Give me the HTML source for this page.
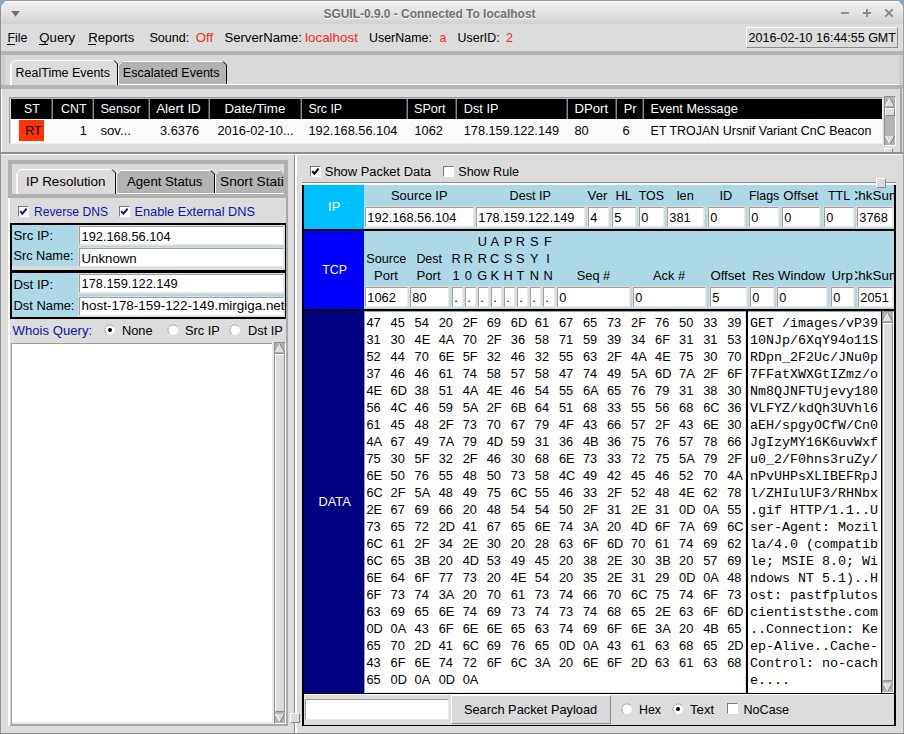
<!DOCTYPE html><html><head><meta charset="utf-8"><style>
html,body{margin:0;padding:0;}
body{width:904px;height:734px;position:relative;overflow:hidden;background:#d9d9d9;font-family:"Liberation Sans",sans-serif;}
.a{position:absolute;box-sizing:border-box;}
.t{position:absolute;line-height:0;white-space:pre;font-family:"Liberation Sans",sans-serif;}
.m{font-family:"Liberation Mono",monospace;}
</style></head><body>
<div class="a" style="left:0;top:0;width:904px;height:24px;background:#9a9a9a;clip-path:polygon(5px 0,899px 0,904px 5px,904px 100%,0 100%,0 5px)"></div>
<div class="a" style="left:1px;top:1px;width:902px;height:23px;background:linear-gradient(#eeeeee,#e4e4e4 50%,#d2d2d2);clip-path:polygon(4.5px 0,897.5px 0,902px 4.5px,902px 100%,0 100%,0 4.5px)"></div>
<div class="a" style="left:0px;top:0px;width:904px;height:6px;background:#86a8cc;z-index:-1"></div>
<div class="a" style="left:0px;top:0px;width:904px;height:6px;background:#86a8cc;clip-path:polygon(0 0,5px 0,0 5px);"></div>
<div class="a" style="left:0px;top:0px;width:904px;height:6px;background:#86a8cc;clip-path:polygon(899px 0,904px 0,904px 5px);"></div>
<div class="a" style="left:5px;top:1px;width:894px;height:1px;background:#fafafa"></div>
<svg class="a" style="left:10px;top:10px" width="11" height="8" viewBox="0 0 11 8"><path d="M1.3 1 L9.7 1 L5.5 6.8 Z" fill="#6e6e6e"/></svg>
<div class="t" style="left:323.50px;top:14px;font-size:11.94px;color:#727272;font-weight:bold;text-shadow:0 1px 0 #fafafa;">SGUIL-0.9.0 - Connected To localhost</div>
<svg class="a" style="left:838px;top:5px" width="60" height="16" viewBox="0 0 60 16"><path d="M3 8 H11" stroke="#858585" stroke-width="1.8"/><path d="M25 8 H33 M29 4 V12" stroke="#858585" stroke-width="1.8"/><path d="M47.3 4.3 L54.7 11.7 M54.7 4.3 L47.3 11.7" stroke="#858585" stroke-width="1.8"/></svg>
<div class="a" style="left:0px;top:24px;width:904px;height:27px;background:#dcdcdc;"></div>
<div class="a" style="left:0px;top:5px;width:1px;height:729px;background:#909090;"></div>
<div class="a" style="left:903px;top:5px;width:1px;height:729px;background:#a0a0a0;"></div>
<div class="a" style="left:0px;top:733px;width:904px;height:1px;background:#909090;"></div>
<div class="t" style="left:7.50px;top:38px;font-size:12.4px;color:#000;">File</div>
<div class="a" style="left:7px;top:44px;width:8px;height:1px;background:#000;"></div>
<div class="t" style="left:39.30px;top:38px;font-size:13.2px;color:#000;">Query</div>
<div class="a" style="left:39px;top:44px;width:9px;height:1px;background:#000;"></div>
<div class="t" style="left:88.20px;top:38px;font-size:13.2px;color:#000;">Reports</div>
<div class="a" style="left:88px;top:44px;width:8px;height:1px;background:#000;"></div>
<div class="t" style="left:149.40px;top:38px;font-size:12.62px;color:#000;">Sound:</div>
<div class="t" style="left:195.80px;top:38px;font-size:13.2px;color:#ff2a1a;">Off</div>
<div class="t" style="left:224.40px;top:38px;font-size:13.16px;color:#000;">ServerName:</div>
<div class="t" style="left:305.00px;top:38px;font-size:13.42px;color:#ff2a1a;">localhost</div>
<div class="t" style="left:369.00px;top:38px;font-size:12.45px;color:#000;">UserName:</div>
<div class="t" style="left:439.60px;top:38px;font-size:12.4px;color:#ff2a1a;">a</div>
<div class="t" style="left:457.60px;top:38px;font-size:12.4px;color:#000;">UserID:</div>
<div class="t" style="left:506.00px;top:38px;font-size:12.5px;color:#ff2a1a;">2</div>
<div class="a" style="left:746px;top:27px;width:152px;height:21px;background:#dcdcdc;border-style:solid;border-width:1px;border-color:#fff #8e8e8e #8e8e8e #fff"></div>
<div class="t" style="left:748.60px;top:38px;font-size:12.51px;color:#000;">2016-02-10 16:44:55 GMT</div>
<div class="a" style="left:1px;top:51px;width:902px;height:4px;background:#b4b4b4;"></div>
<div class="a" style="left:1px;top:55px;width:4px;height:30px;background:#cdcdcd;"></div>
<div class="a" style="left:1px;top:85px;width:902px;height:4px;background:#b4b4b4;"></div>
<div class="a" style="left:899px;top:55px;width:4px;height:30px;background:#cdcdcd;"></div>
<svg class="a" style="left:10px;top:60px" width="108" height="25" viewBox="0 0 108 25"><path d="M0 4 L4 0 L104 0 L108 4 L108 25 L0 25 Z" fill="#dcdcdc"/><path d="M0.5 25 L0.5 4.5 L4.5 0.5 L104 0.5" fill="none" stroke="#fff" stroke-width="1"/><path d="M1.5 25 L1.5 4.5" fill="none" stroke="#fff" stroke-width="1"/><path d="M104 0.5 L107.5 4 L107.5 25" fill="none" stroke="#000" stroke-width="1"/></svg>
<svg class="a" style="left:118px;top:61px" width="109" height="23" viewBox="0 0 109 23"><path d="M0 4 L4 0 L105 0 L109 4 L109 23 L0 23 Z" fill="#b3b3b3"/><path d="M0.5 23 L0.5 4.5 L4.5 0.5 L105 0.5" fill="none" stroke="#fff" stroke-width="1"/><path d="M105 0.5 L108.5 4 L108.5 23" fill="none" stroke="#000" stroke-width="1"/></svg>
<div class="a" style="left:118px;top:84px;width:781px;height:1px;background:#fff;"></div>
<div class="t" style="left:15.60px;top:73px;font-size:12.47px;color:#000;">RealTime Events</div>
<div class="t" style="left:122.80px;top:73px;font-size:12.54px;color:#000;">Escalated Events</div>
<div class="a" style="left:1px;top:89px;width:902px;height:63px;background:#dcdcdc;"></div>
<div class="a" style="left:1px;top:89px;width:1px;height:63px;background:#fff;"></div>
<div class="a" style="left:900px;top:89px;width:2px;height:63px;background:#a8a8a8;"></div>
<div class="a" style="left:9px;top:97px;width:874px;height:47px;border-style:solid;border-width:1px;border-color:#9a9a9a #f0f0f0 #f0f0f0 #9a9a9a"></div>
<div class="a" style="left:10px;top:98px;width:872px;height:1px;background:#b8b8b8;"></div>
<div class="a" style="left:11px;top:99px;width:871px;height:20px;background:#000;"></div>
<div class="a" style="left:11px;top:119px;width:871px;height:24px;background:#fbfbfb;"></div>
<div class="a" style="left:51px;top:99px;width:1px;height:20px;background:#404040;"></div>
<div class="a" style="left:52px;top:99px;width:1px;height:20px;background:#8a8a8a;"></div>
<div class="a" style="left:92px;top:99px;width:1px;height:20px;background:#404040;"></div>
<div class="a" style="left:93px;top:99px;width:1px;height:20px;background:#8a8a8a;"></div>
<div class="a" style="left:148px;top:99px;width:1px;height:20px;background:#404040;"></div>
<div class="a" style="left:149px;top:99px;width:1px;height:20px;background:#8a8a8a;"></div>
<div class="a" style="left:208px;top:99px;width:1px;height:20px;background:#404040;"></div>
<div class="a" style="left:209px;top:99px;width:1px;height:20px;background:#8a8a8a;"></div>
<div class="a" style="left:300px;top:99px;width:1px;height:20px;background:#404040;"></div>
<div class="a" style="left:301px;top:99px;width:1px;height:20px;background:#8a8a8a;"></div>
<div class="a" style="left:406px;top:99px;width:1px;height:20px;background:#404040;"></div>
<div class="a" style="left:407px;top:99px;width:1px;height:20px;background:#8a8a8a;"></div>
<div class="a" style="left:455px;top:99px;width:1px;height:20px;background:#404040;"></div>
<div class="a" style="left:456px;top:99px;width:1px;height:20px;background:#8a8a8a;"></div>
<div class="a" style="left:566px;top:99px;width:1px;height:20px;background:#404040;"></div>
<div class="a" style="left:567px;top:99px;width:1px;height:20px;background:#8a8a8a;"></div>
<div class="a" style="left:615px;top:99px;width:1px;height:20px;background:#404040;"></div>
<div class="a" style="left:616px;top:99px;width:1px;height:20px;background:#8a8a8a;"></div>
<div class="a" style="left:642px;top:99px;width:1px;height:20px;background:#404040;"></div>
<div class="a" style="left:643px;top:99px;width:1px;height:20px;background:#8a8a8a;"></div>
<div class="t" style="left:23.90px;top:109px;font-size:12.4px;color:#fff;">ST</div>
<div class="t" style="left:61.00px;top:109px;font-size:12.4px;color:#fff;">CNT</div>
<div class="t" style="left:100.40px;top:109px;font-size:12.71px;color:#fff;">Sensor</div>
<div class="t" style="left:156.20px;top:109px;font-size:13.39px;color:#fff;">Alert ID</div>
<div class="t" style="left:224.40px;top:109px;font-size:13.32px;color:#fff;">Date/Time</div>
<div class="t" style="left:308.40px;top:109px;font-size:12.4px;color:#fff;">Src IP</div>
<div class="t" style="left:414.00px;top:109px;font-size:12.64px;color:#fff;">SPort</div>
<div class="t" style="left:463.80px;top:109px;font-size:12.72px;color:#fff;">Dst IP</div>
<div class="t" style="left:574.40px;top:109px;font-size:13.2px;color:#fff;">DPort</div>
<div class="t" style="left:623.70px;top:109px;font-size:12.8px;color:#fff;">Pr</div>
<div class="t" style="left:650.50px;top:109px;font-size:12.67px;color:#fff;">Event Message</div>
<div class="a" style="left:19px;top:120px;width:25px;height:21px;background:#ff3300;"></div>
<div class="t" style="left:25.30px;top:131px;font-size:12.4px;color:#000;">RT</div>
<div class="t" style="left:79.80px;top:131px;font-size:12.8px;color:#000;">1</div>
<div class="t" style="left:100.40px;top:131px;font-size:13.19px;color:#000;">sov...</div>
<div class="t" style="left:160.00px;top:131px;font-size:12.8px;color:#000;">3.6376</div>
<div class="t" style="left:217.50px;top:131px;font-size:12.8px;color:#000;">2016-02-10...</div>
<div class="t" style="left:308.50px;top:131px;font-size:12.8px;color:#000;">192.168.56.104</div>
<div class="t" style="left:414.50px;top:131px;font-size:12.8px;color:#000;">1062</div>
<div class="t" style="left:463.80px;top:131px;font-size:12.7px;color:#000;">178.159.122.149</div>
<div class="t" style="left:574.50px;top:131px;font-size:12.8px;color:#000;">80</div>
<div class="t" style="left:622.50px;top:131px;font-size:12.8px;color:#000;">6</div>
<div class="t" style="left:650.60px;top:131px;font-size:12.46px;color:#000;">ET TROJAN Ursnif Variant CnC Beacon</div>
<div class="a" style="left:884px;top:96px;width:12px;height:50px;background:#b3b3b3;border-style:solid;border-width:1px;border-color:#8e8e8e #fff #fff #8e8e8e"></div>
<div class="a" style="left:885px;top:97px;width:10px;height:10px;background:#b3b3b3;"></div>
<svg class="a" style="left:885px;top:97px" width="10" height="10" viewBox="0 0 10 10"><path d="M5 1 L9.5 9 L0.5 9 Z" fill="#dcdcdc"/><path d="M0.5 9 L5 1" stroke="#fff" stroke-width="1" fill="none"/><path d="M5 1 L9.5 9" stroke="#7a7a7a" stroke-width="1" fill="none"/></svg>
<div class="a" style="left:885px;top:107px;width:10px;height:1px;background:#8e8e8e;"></div>
<div class="a" style="left:885px;top:108px;width:10px;height:8px;background:#dcdcdc;border-style:solid;border-width:1px;border-color:#fff #8e8e8e #8e8e8e #fff"></div>
<div class="a" style="left:885px;top:134px;width:10px;height:11px;background:#b3b3b3;"></div>
<svg class="a" style="left:885px;top:135px" width="10" height="10" viewBox="0 0 10 10"><path d="M0.5 1 L9.5 1 L5 9 Z" fill="#dcdcdc"/><path d="M0.5 1 L5 9" stroke="#fff" stroke-width="1" fill="none"/><path d="M9.5 1 L5 9" stroke="#7a7a7a" stroke-width="1" fill="none"/></svg>
<div class="a" style="left:884px;top:148px;width:9px;height:10px;background:#dcdcdc;border:1px solid;border-color:#fff #8a8a8a #8a8a8a #fff"></div>
<div class="a" style="left:1px;top:152px;width:902px;height:2px;background:#8e8e8e;"></div>
<div class="a" style="left:1px;top:154px;width:902px;height:1px;background:#fff;"></div>
<div class="a" style="left:1px;top:155px;width:293px;height:578px;background:#dcdcdc;"></div>
<div class="a" style="left:294px;top:155px;width:1px;height:578px;background:#8e8e8e;"></div>
<div class="a" style="left:295px;top:155px;width:2px;height:578px;background:#fff;"></div>
<div class="a" style="left:8px;top:198px;width:2px;height:528px;background:#fff;"></div>
<div class="a" style="left:286px;top:198px;width:2px;height:528px;background:#aaaaaa;"></div>
<div class="a" style="left:10px;top:724px;width:278px;height:2px;background:#a8a8a8;"></div>
<div class="a" style="left:8px;top:160px;width:280px;height:4px;background:#b0b0b0;"></div>
<div class="a" style="left:8px;top:164px;width:4px;height:31px;background:#b0b0b0;"></div>
<div class="a" style="left:284px;top:164px;width:4px;height:31px;background:#b0b0b0;"></div>
<div class="a" style="left:8px;top:194px;width:280px;height:4px;background:#b0b0b0;"></div>
<div class="a" style="left:12px;top:164px;width:272px;height:30px;background:#dcdcdc;"></div>
<svg class="a" style="left:16px;top:169px" width="100" height="25" viewBox="0 0 100 25"><path d="M0 4 L4 0 L96 0 L100 4 L100 25 L0 25 Z" fill="#dcdcdc"/><path d="M0.5 25 L0.5 4.5 L4.5 0.5 L96 0.5" fill="none" stroke="#fff" stroke-width="1"/><path d="M1.5 25 L1.5 4.5" fill="none" stroke="#fff" stroke-width="1"/><path d="M96 0.5 L99.5 4 L99.5 25" fill="none" stroke="#000" stroke-width="1"/></svg>
<svg class="a" style="left:116px;top:170px" width="99" height="23" viewBox="0 0 99 23"><path d="M0 4 L4 0 L95 0 L99 4 L99 23 L0 23 Z" fill="#b3b3b3"/><path d="M0.5 23 L0.5 4.5 L4.5 0.5 L95 0.5" fill="none" stroke="#fff" stroke-width="1"/><path d="M95 0.5 L98.5 4 L98.5 23" fill="none" stroke="#000" stroke-width="1"/></svg>
<svg class="a" style="left:215px;top:170px" width="69" height="23" viewBox="0 0 69 23"><path d="M0 4 L4 0 L65 0 L69 4 L69 23 L0 23 Z" fill="#b3b3b3"/><path d="M0.5 23 L0.5 4.5 L4.5 0.5 L65 0.5" fill="none" stroke="#fff" stroke-width="1"/></svg>
<div class="a" style="left:284px;top:164px;width:4px;height:31px;background:#b0b0b0;"></div>
<div class="a" style="left:116px;top:193px;width:168px;height:1px;background:#fff;"></div>
<div class="t" style="left:26.00px;top:182px;font-size:13.42px;color:#000;">IP Resolution</div>
<div class="t" style="left:127.00px;top:182px;font-size:13.18px;color:#000;">Agent Status</div>
<div class="a" style="left:215px;top:170px;width:69px;height:24px;overflow:hidden">
<div class="t" style="left:5.00px;top:12px;font-size:13.7px;color:#000;">Snort Statistics</div>
</div>
<div class="a" style="left:18px;top:206px;width:11px;height:11px;background:#fff;border-style:solid;border-width:1px;border-color:#7a7a7a #fff #fff #7a7a7a"></div>
<svg class="a" style="left:18px;top:206px" width="11" height="11" viewBox="0 0 11 11"><path d="M2.2 5.2 L4.3 7.6 L8.6 2.6" fill="none" stroke="#1212a0" stroke-width="2"/></svg>
<div class="t" style="left:34.00px;top:212px;font-size:12.11px;color:#1212a0;">Reverse DNS</div>
<div class="a" style="left:119px;top:206px;width:11px;height:11px;background:#fff;border-style:solid;border-width:1px;border-color:#7a7a7a #fff #fff #7a7a7a"></div>
<svg class="a" style="left:119px;top:206px" width="11" height="11" viewBox="0 0 11 11"><path d="M2.2 5.2 L4.3 7.6 L8.6 2.6" fill="none" stroke="#1212a0" stroke-width="2"/></svg>
<div class="t" style="left:134.50px;top:212px;font-size:12.75px;color:#1212a0;">Enable External DNS</div>
<div class="a" style="left:10px;top:223px;width:276px;height:96px;background:#000;"></div>
<div class="a" style="left:12px;top:225px;width:273px;height:41px;background:#add8e6;"></div>
<div class="a" style="left:12px;top:266px;width:273px;height:4px;background:#dcdcdc;"></div>
<div class="a" style="left:12px;top:273px;width:273px;height:44px;background:#add8e6;"></div>
<div class="t" style="left:13.50px;top:236px;font-size:13.2px;color:#000;">Src IP:</div>
<div class="t" style="left:13.50px;top:256px;font-size:12.71px;color:#000;">Src Name:</div>
<div class="t" style="left:13.50px;top:285px;font-size:13.2px;color:#000;">Dst IP:</div>
<div class="t" style="left:13.50px;top:306px;font-size:12.92px;color:#000;">Dst Name:</div>
<div class="a" style="left:78px;top:225px;width:207px;height:21px;background:#dcdcdc;"></div>
<div class="a" style="left:79px;top:226px;width:205px;height:19px;background:#fff;border-style:solid;border-width:1px;border-color:#a0a0a0 #e8e8e8 #e8e8e8 #a0a0a0"></div>
<div class="a" style="left:78px;top:247px;width:207px;height:21px;background:#dcdcdc;"></div>
<div class="a" style="left:79px;top:248px;width:205px;height:19px;background:#fff;border-style:solid;border-width:1px;border-color:#a0a0a0 #e8e8e8 #e8e8e8 #a0a0a0"></div>
<div class="a" style="left:78px;top:273px;width:207px;height:21px;background:#dcdcdc;"></div>
<div class="a" style="left:79px;top:274px;width:205px;height:19px;background:#fff;border-style:solid;border-width:1px;border-color:#a0a0a0 #e8e8e8 #e8e8e8 #a0a0a0"></div>
<div class="a" style="left:78px;top:296px;width:207px;height:21px;background:#dcdcdc;"></div>
<div class="a" style="left:79px;top:297px;width:205px;height:19px;background:#fff;border-style:solid;border-width:1px;border-color:#a0a0a0 #e8e8e8 #e8e8e8 #a0a0a0"></div>
<div class="t" style="left:81.60px;top:237px;font-size:12.8px;color:#000;">192.168.56.104</div>
<div class="t" style="left:81.60px;top:259px;font-size:13.2px;color:#000;">Unknown</div>
<div class="t" style="left:81.60px;top:284px;font-size:12.8px;color:#000;">178.159.122.149</div>
<div class="t" style="left:81.60px;top:306px;font-size:13.43px;color:#000;">host-178-159-122-149.mirgiga.net</div>
<div class="t" style="left:12.60px;top:331px;font-size:13.15px;color:#1212a0;">Whois Query:</div>
<svg class="a" style="left:104px;top:324px" width="12" height="12" viewBox="0 0 12 12"><circle cx="6" cy="6" r="5" fill="#fff"/><path d="M2.46 9.54 A5 5 0 0 1 9.54 2.46" fill="none" stroke="#6e6e6e" stroke-width="0.9" stroke-dasharray="1.4 0.9"/><circle cx="6" cy="6" r="2" fill="#000"/></svg>
<div class="t" style="left:122.00px;top:331px;font-size:12.8px;color:#000;">None</div>
<svg class="a" style="left:167px;top:324px" width="12" height="12" viewBox="0 0 12 12"><circle cx="6" cy="6" r="5" fill="#fff"/><path d="M2.46 9.54 A5 5 0 0 1 9.54 2.46" fill="none" stroke="#6e6e6e" stroke-width="0.9" stroke-dasharray="1.4 0.9"/></svg>
<div class="t" style="left:185.00px;top:331px;font-size:12.8px;color:#000;">Src IP</div>
<svg class="a" style="left:229px;top:324px" width="12" height="12" viewBox="0 0 12 12"><circle cx="6" cy="6" r="5" fill="#fff"/><path d="M2.46 9.54 A5 5 0 0 1 9.54 2.46" fill="none" stroke="#6e6e6e" stroke-width="0.9" stroke-dasharray="1.4 0.9"/></svg>
<div class="t" style="left:248.00px;top:331px;font-size:12.8px;color:#000;">Dst IP</div>
<div class="a" style="left:11px;top:343px;width:263px;height:381px;background:#e8e8e8;"></div>
<div class="a" style="left:11px;top:343px;width:261px;height:1px;background:#a0a0a0;"></div>
<div class="a" style="left:11px;top:343px;width:1px;height:381px;background:#a0a0a0;"></div>
<div class="a" style="left:12px;top:344px;width:260px;height:378px;background:#fff;"></div>
<div class="a" style="left:274px;top:342px;width:12px;height:382px;background:#b3b3b3;border-style:solid;border-width:1px;border-color:#8e8e8e #fff #fff #8e8e8e"></div>
<div class="a" style="left:275px;top:343px;width:10px;height:10px;background:#b3b3b3;"></div>
<svg class="a" style="left:275px;top:343px" width="10" height="10" viewBox="0 0 10 10"><path d="M5 1 L9.5 9 L0.5 9 Z" fill="#dcdcdc"/><path d="M0.5 9 L5 1" stroke="#fff" stroke-width="1" fill="none"/><path d="M5 1 L9.5 9" stroke="#7a7a7a" stroke-width="1" fill="none"/></svg>
<div class="a" style="left:275px;top:353px;width:10px;height:1px;background:#8e8e8e;"></div>
<div class="a" style="left:275px;top:354px;width:10px;height:358px;background:#dcdcdc;border-style:solid;border-width:1px;border-color:#fff #8e8e8e #8e8e8e #fff"></div>
<div class="a" style="left:275px;top:712px;width:10px;height:11px;background:#b3b3b3;"></div>
<svg class="a" style="left:275px;top:713px" width="10" height="10" viewBox="0 0 10 10"><path d="M0.5 1 L9.5 1 L5 9 Z" fill="#dcdcdc"/><path d="M0.5 1 L5 9" stroke="#fff" stroke-width="1" fill="none"/><path d="M9.5 1 L5 9" stroke="#7a7a7a" stroke-width="1" fill="none"/></svg>
<div class="a" style="left:298px;top:155px;width:604px;height:578px;background:#dcdcdc;"></div>
<div class="a" style="left:310px;top:166px;width:11px;height:11px;background:#fff;border-style:solid;border-width:1px;border-color:#7a7a7a #fff #fff #7a7a7a"></div>
<svg class="a" style="left:310px;top:166px" width="11" height="11" viewBox="0 0 11 11"><path d="M2.2 5.2 L4.3 7.6 L8.6 2.6" fill="none" stroke="#000" stroke-width="2"/></svg>
<div class="t" style="left:324.80px;top:172px;font-size:12.92px;color:#000;">Show Packet Data</div>
<div class="a" style="left:443px;top:166px;width:11px;height:11px;background:#fff;border-style:solid;border-width:1px;border-color:#7a7a7a #fff #fff #7a7a7a"></div>
<div class="t" style="left:458.30px;top:172px;font-size:12.54px;color:#000;">Show Rule</div>
<div class="a" style="left:302px;top:182px;width:594px;height:1px;background:#8e8e8e;"></div>
<div class="a" style="left:302px;top:183px;width:594px;height:2px;background:#fafafa;"></div>
<div class="a" style="left:302px;top:185px;width:594px;height:541px;background:#000;"></div>
<div class="a" style="left:304px;top:185px;width:60px;height:44px;background:#00bfff;"></div>
<div class="a" style="left:304px;top:231px;width:60px;height:78px;background:#0000ff;"></div>
<div class="a" style="left:304px;top:311px;width:60px;height:382px;background:#000080;"></div>
<div class="a" style="left:364px;top:185px;width:530px;height:44px;background:#add8e6;"></div>
<div class="a" style="left:364px;top:231px;width:530px;height:78px;background:#add8e6;"></div>
<div class="a" style="left:304px;top:693px;width:590px;height:1px;background:#000;"></div>
<div class="a" style="left:304px;top:694px;width:590px;height:31px;background:#dcdcdc;"></div>
<div class="a" style="left:304px;top:694px;width:590px;height:1px;background:#fafafa;"></div>
<div class="a" style="left:876px;top:178px;width:10px;height:10px;background:#dcdcdc;border:1px solid;border-color:#fff #8a8a8a #8a8a8a #fff"></div>
<div class="t" style="left:328.10px;top:207px;font-size:12.8px;color:#fff;">IP</div>
<div class="t" style="left:322.30px;top:270px;font-size:12.4px;color:#fff;">TCP</div>
<div class="t" style="left:318.50px;top:502px;font-size:12.8px;color:#fff;">DATA</div>
<div class="t" style="left:391.00px;top:196px;font-size:12.89px;color:#000;">Source IP</div>
<div class="t" style="left:509.60px;top:196px;font-size:12.62px;color:#000;">Dest IP</div>
<div class="t" style="left:587.60px;top:196px;font-size:13.2px;color:#000;">Ver</div>
<div class="t" style="left:615.50px;top:196px;font-size:12.8px;color:#000;">HL</div>
<div class="t" style="left:638.70px;top:196px;font-size:12.4px;color:#000;">TOS</div>
<div class="t" style="left:676.70px;top:196px;font-size:12.8px;color:#000;">len</div>
<div class="t" style="left:719.40px;top:196px;font-size:12.8px;color:#000;">ID</div>
<div class="t" style="left:749.00px;top:196px;font-size:12.4px;color:#000;">Flags</div>
<div class="t" style="left:783.30px;top:196px;font-size:13.2px;color:#000;">Offset</div>
<div class="t" style="left:828.00px;top:196px;font-size:12.4px;color:#000;">TTL</div>
<div class="a" style="left:855px;top:185px;width:39px;height:20px;overflow:hidden">
<div class="t" style="left:-6.30px;top:11px;font-size:13.4px;color:#000;">ChkSum</div>
</div>
<div class="a" style="left:364px;top:206px;width:111px;height:22px;background:#dcdcdc;"></div>
<div class="a" style="left:365px;top:207px;width:109px;height:20px;background:#fff;border-style:solid;border-width:1px;border-color:#a0a0a0 #e8e8e8 #e8e8e8 #a0a0a0"></div>
<div class="t" style="left:367.30px;top:218px;font-size:12.8px;color:#000;">192.168.56.104</div>
<div class="a" style="left:475px;top:206px;width:111px;height:22px;background:#dcdcdc;"></div>
<div class="a" style="left:476px;top:207px;width:109px;height:20px;background:#fff;border-style:solid;border-width:1px;border-color:#a0a0a0 #e8e8e8 #e8e8e8 #a0a0a0"></div>
<div class="t" style="left:478.30px;top:218px;font-size:12.8px;color:#000;">178.159.122.149</div>
<div class="a" style="left:587px;top:206px;width:23px;height:22px;background:#dcdcdc;"></div>
<div class="a" style="left:588px;top:207px;width:21px;height:20px;background:#fff;border-style:solid;border-width:1px;border-color:#a0a0a0 #e8e8e8 #e8e8e8 #a0a0a0"></div>
<div class="t" style="left:590.30px;top:218px;font-size:12.8px;color:#000;">4</div>
<div class="a" style="left:611px;top:206px;width:26px;height:22px;background:#dcdcdc;"></div>
<div class="a" style="left:612px;top:207px;width:24px;height:20px;background:#fff;border-style:solid;border-width:1px;border-color:#a0a0a0 #e8e8e8 #e8e8e8 #a0a0a0"></div>
<div class="t" style="left:614.30px;top:218px;font-size:12.8px;color:#000;">5</div>
<div class="a" style="left:638px;top:206px;width:27px;height:22px;background:#dcdcdc;"></div>
<div class="a" style="left:639px;top:207px;width:25px;height:20px;background:#fff;border-style:solid;border-width:1px;border-color:#a0a0a0 #e8e8e8 #e8e8e8 #a0a0a0"></div>
<div class="t" style="left:641.30px;top:218px;font-size:12.8px;color:#000;">0</div>
<div class="a" style="left:666px;top:206px;width:39px;height:22px;background:#dcdcdc;"></div>
<div class="a" style="left:667px;top:207px;width:37px;height:20px;background:#fff;border-style:solid;border-width:1px;border-color:#a0a0a0 #e8e8e8 #e8e8e8 #a0a0a0"></div>
<div class="t" style="left:669.30px;top:218px;font-size:12.8px;color:#000;">381</div>
<div class="a" style="left:707px;top:206px;width:39px;height:22px;background:#dcdcdc;"></div>
<div class="a" style="left:708px;top:207px;width:37px;height:20px;background:#fff;border-style:solid;border-width:1px;border-color:#a0a0a0 #e8e8e8 #e8e8e8 #a0a0a0"></div>
<div class="t" style="left:710.30px;top:218px;font-size:12.8px;color:#000;">0</div>
<div class="a" style="left:748px;top:206px;width:32px;height:22px;background:#dcdcdc;"></div>
<div class="a" style="left:749px;top:207px;width:30px;height:20px;background:#fff;border-style:solid;border-width:1px;border-color:#a0a0a0 #e8e8e8 #e8e8e8 #a0a0a0"></div>
<div class="t" style="left:751.30px;top:218px;font-size:12.8px;color:#000;">0</div>
<div class="a" style="left:781px;top:206px;width:40px;height:22px;background:#dcdcdc;"></div>
<div class="a" style="left:782px;top:207px;width:38px;height:20px;background:#fff;border-style:solid;border-width:1px;border-color:#a0a0a0 #e8e8e8 #e8e8e8 #a0a0a0"></div>
<div class="t" style="left:784.30px;top:218px;font-size:12.8px;color:#000;">0</div>
<div class="a" style="left:823px;top:206px;width:32px;height:22px;background:#dcdcdc;"></div>
<div class="a" style="left:824px;top:207px;width:30px;height:20px;background:#fff;border-style:solid;border-width:1px;border-color:#a0a0a0 #e8e8e8 #e8e8e8 #a0a0a0"></div>
<div class="t" style="left:826.30px;top:218px;font-size:12.8px;color:#000;">0</div>
<div class="a" style="left:856px;top:206px;width:38px;height:22px;background:#dcdcdc;"></div>
<div class="a" style="left:857px;top:207px;width:36px;height:20px;background:#fff;border-style:solid;border-width:1px;border-color:#a0a0a0 #e8e8e8 #e8e8e8 #a0a0a0"></div>
<div class="t" style="left:859.30px;top:218px;font-size:12.8px;color:#000;">3768</div>
<div class="t" style="left:366.20px;top:259px;font-size:12.71px;color:#000;">Source</div>
<div class="t" style="left:374.00px;top:276px;font-size:13.04px;color:#000;">Port</div>
<div class="t" style="left:416.40px;top:259px;font-size:12.43px;color:#000;">Dest</div>
<div class="t" style="left:416.40px;top:276px;font-size:13.2px;color:#000;">Port</div>
<div class="t" style="left:451.39px;top:259px;font-size:12.8px;color:#000;">R</div>
<div class="t" style="left:452.42px;top:276px;font-size:12.8px;color:#000;">1</div>
<div class="t" style="left:463.79px;top:259px;font-size:12.8px;color:#000;">R</div>
<div class="t" style="left:464.82px;top:276px;font-size:12.8px;color:#000;">0</div>
<div class="t" style="left:477.69px;top:242px;font-size:12.8px;color:#000;">U</div>
<div class="t" style="left:477.69px;top:259px;font-size:12.8px;color:#000;">R</div>
<div class="t" style="left:477.31px;top:276px;font-size:12.8px;color:#000;">G</div>
<div class="t" style="left:490.41px;top:242px;font-size:12.8px;color:#000;">A</div>
<div class="t" style="left:490.09px;top:259px;font-size:12.8px;color:#000;">C</div>
<div class="t" style="left:490.41px;top:276px;font-size:12.8px;color:#000;">K</div>
<div class="t" style="left:503.71px;top:242px;font-size:12.8px;color:#000;">P</div>
<div class="t" style="left:503.71px;top:259px;font-size:12.8px;color:#000;">S</div>
<div class="t" style="left:503.39px;top:276px;font-size:12.8px;color:#000;">H</div>
<div class="t" style="left:515.79px;top:242px;font-size:12.8px;color:#000;">R</div>
<div class="t" style="left:516.11px;top:259px;font-size:12.8px;color:#000;">S</div>
<div class="t" style="left:516.50px;top:276px;font-size:12.8px;color:#000;">T</div>
<div class="t" style="left:530.11px;top:242px;font-size:12.8px;color:#000;">S</div>
<div class="t" style="left:530.11px;top:259px;font-size:12.8px;color:#000;">Y</div>
<div class="t" style="left:529.79px;top:276px;font-size:12.8px;color:#000;">N</div>
<div class="t" style="left:544.10px;top:242px;font-size:12.8px;color:#000;">F</div>
<div class="t" style="left:546.21px;top:259px;font-size:12.8px;color:#000;">I</div>
<div class="t" style="left:543.39px;top:276px;font-size:12.8px;color:#000;">N</div>
<div class="t" style="left:576.80px;top:276px;font-size:12.75px;color:#000;">Seq #</div>
<div class="t" style="left:653.10px;top:276px;font-size:12.76px;color:#000;">Ack #</div>
<div class="t" style="left:710.40px;top:276px;font-size:13.2px;color:#000;">Offset</div>
<div class="t" style="left:752.20px;top:276px;font-size:12.4px;color:#000;">Res</div>
<div class="t" style="left:778.00px;top:276px;font-size:13.2px;color:#000;">Window</div>
<div class="t" style="left:831.50px;top:276px;font-size:13.2px;color:#000;">Urp</div>
<div class="a" style="left:855px;top:265px;width:39px;height:20px;overflow:hidden">
<div class="t" style="left:-6.30px;top:11px;font-size:13.4px;color:#000;">ChkSum</div>
</div>
<div class="a" style="left:364px;top:286px;width:45px;height:22px;background:#dcdcdc;"></div>
<div class="a" style="left:365px;top:287px;width:43px;height:20px;background:#fff;border-style:solid;border-width:1px;border-color:#a0a0a0 #e8e8e8 #e8e8e8 #a0a0a0"></div>
<div class="t" style="left:367.30px;top:298px;font-size:12.8px;color:#000;">1062</div>
<div class="a" style="left:409px;top:286px;width:41px;height:22px;background:#dcdcdc;"></div>
<div class="a" style="left:410px;top:287px;width:39px;height:20px;background:#fff;border-style:solid;border-width:1px;border-color:#a0a0a0 #e8e8e8 #e8e8e8 #a0a0a0"></div>
<div class="t" style="left:412.30px;top:298px;font-size:12.8px;color:#000;">80</div>
<div class="a" style="left:451px;top:286px;width:13px;height:22px;background:#dcdcdc;"></div>
<div class="a" style="left:452px;top:287px;width:11px;height:20px;background:#fff;border-style:solid;border-width:1px;border-color:#a0a0a0 #e8e8e8 #e8e8e8 #a0a0a0"></div>
<div class="t" style="left:454.30px;top:298px;font-size:12.8px;color:#000;">.</div>
<div class="a" style="left:464px;top:286px;width:13px;height:22px;background:#dcdcdc;"></div>
<div class="a" style="left:465px;top:287px;width:11px;height:20px;background:#fff;border-style:solid;border-width:1px;border-color:#a0a0a0 #e8e8e8 #e8e8e8 #a0a0a0"></div>
<div class="t" style="left:467.30px;top:298px;font-size:12.8px;color:#000;">.</div>
<div class="a" style="left:477px;top:286px;width:13px;height:22px;background:#dcdcdc;"></div>
<div class="a" style="left:478px;top:287px;width:11px;height:20px;background:#fff;border-style:solid;border-width:1px;border-color:#a0a0a0 #e8e8e8 #e8e8e8 #a0a0a0"></div>
<div class="t" style="left:480.30px;top:298px;font-size:12.8px;color:#000;">.</div>
<div class="a" style="left:490px;top:286px;width:13px;height:22px;background:#dcdcdc;"></div>
<div class="a" style="left:491px;top:287px;width:11px;height:20px;background:#fff;border-style:solid;border-width:1px;border-color:#a0a0a0 #e8e8e8 #e8e8e8 #a0a0a0"></div>
<div class="t" style="left:493.30px;top:298px;font-size:12.8px;color:#000;">.</div>
<div class="a" style="left:503px;top:286px;width:13px;height:22px;background:#dcdcdc;"></div>
<div class="a" style="left:504px;top:287px;width:11px;height:20px;background:#fff;border-style:solid;border-width:1px;border-color:#a0a0a0 #e8e8e8 #e8e8e8 #a0a0a0"></div>
<div class="t" style="left:506.30px;top:298px;font-size:12.8px;color:#000;">.</div>
<div class="a" style="left:516px;top:286px;width:13px;height:22px;background:#dcdcdc;"></div>
<div class="a" style="left:517px;top:287px;width:11px;height:20px;background:#fff;border-style:solid;border-width:1px;border-color:#a0a0a0 #e8e8e8 #e8e8e8 #a0a0a0"></div>
<div class="t" style="left:519.30px;top:298px;font-size:12.8px;color:#000;">.</div>
<div class="a" style="left:529px;top:286px;width:13px;height:22px;background:#dcdcdc;"></div>
<div class="a" style="left:530px;top:287px;width:11px;height:20px;background:#fff;border-style:solid;border-width:1px;border-color:#a0a0a0 #e8e8e8 #e8e8e8 #a0a0a0"></div>
<div class="t" style="left:532.30px;top:298px;font-size:12.8px;color:#000;">.</div>
<div class="a" style="left:542px;top:286px;width:14px;height:22px;background:#dcdcdc;"></div>
<div class="a" style="left:543px;top:287px;width:12px;height:20px;background:#fff;border-style:solid;border-width:1px;border-color:#a0a0a0 #e8e8e8 #e8e8e8 #a0a0a0"></div>
<div class="t" style="left:545.30px;top:298px;font-size:12.8px;color:#000;">.</div>
<div class="a" style="left:556px;top:286px;width:75px;height:22px;background:#dcdcdc;"></div>
<div class="a" style="left:557px;top:287px;width:73px;height:20px;background:#fff;border-style:solid;border-width:1px;border-color:#a0a0a0 #e8e8e8 #e8e8e8 #a0a0a0"></div>
<div class="t" style="left:559.30px;top:298px;font-size:12.8px;color:#000;">0</div>
<div class="a" style="left:632px;top:286px;width:75px;height:22px;background:#dcdcdc;"></div>
<div class="a" style="left:633px;top:287px;width:73px;height:20px;background:#fff;border-style:solid;border-width:1px;border-color:#a0a0a0 #e8e8e8 #e8e8e8 #a0a0a0"></div>
<div class="t" style="left:635.30px;top:298px;font-size:12.8px;color:#000;">0</div>
<div class="a" style="left:709px;top:286px;width:39px;height:22px;background:#dcdcdc;"></div>
<div class="a" style="left:710px;top:287px;width:37px;height:20px;background:#fff;border-style:solid;border-width:1px;border-color:#a0a0a0 #e8e8e8 #e8e8e8 #a0a0a0"></div>
<div class="t" style="left:712.30px;top:298px;font-size:12.8px;color:#000;">5</div>
<div class="a" style="left:749px;top:286px;width:26px;height:22px;background:#dcdcdc;"></div>
<div class="a" style="left:750px;top:287px;width:24px;height:20px;background:#fff;border-style:solid;border-width:1px;border-color:#a0a0a0 #e8e8e8 #e8e8e8 #a0a0a0"></div>
<div class="t" style="left:752.30px;top:298px;font-size:12.8px;color:#000;">0</div>
<div class="a" style="left:776px;top:286px;width:52px;height:22px;background:#dcdcdc;"></div>
<div class="a" style="left:777px;top:287px;width:50px;height:20px;background:#fff;border-style:solid;border-width:1px;border-color:#a0a0a0 #e8e8e8 #e8e8e8 #a0a0a0"></div>
<div class="t" style="left:779.30px;top:298px;font-size:12.8px;color:#000;">0</div>
<div class="a" style="left:830px;top:286px;width:25px;height:22px;background:#dcdcdc;"></div>
<div class="a" style="left:831px;top:287px;width:23px;height:20px;background:#fff;border-style:solid;border-width:1px;border-color:#a0a0a0 #e8e8e8 #e8e8e8 #a0a0a0"></div>
<div class="t" style="left:833.30px;top:298px;font-size:12.8px;color:#000;">0</div>
<div class="a" style="left:857px;top:286px;width:37px;height:22px;background:#dcdcdc;"></div>
<div class="a" style="left:858px;top:287px;width:35px;height:20px;background:#fff;border-style:solid;border-width:1px;border-color:#a0a0a0 #e8e8e8 #e8e8e8 #a0a0a0"></div>
<div class="t" style="left:860.30px;top:298px;font-size:12.8px;color:#000;">2051</div>
<div class="a" style="left:364px;top:311px;width:382px;height:382px;background:#fff;border-style:solid;border-width:1px;border-color:#a0a0a0 #e4e4e4 #e4e4e4 #a0a0a0"></div>
<div class="a" style="left:747px;top:311px;width:1px;height:382px;background:#000;"></div>
<div class="a" style="left:748px;top:311px;width:134px;height:382px;background:#fff;"></div>
<div class="a" style="left:748px;top:311px;width:133px;height:1px;background:#a0a0a0;"></div>
<div class="a" style="left:881px;top:311px;width:1px;height:382px;background:#000;"></div>
<div class="a" style="left:882px;top:311px;width:12px;height:382px;background:#b3b3b3;border-style:solid;border-width:1px;border-color:#8e8e8e #fff #fff #8e8e8e"></div>
<div class="a" style="left:883px;top:312px;width:10px;height:10px;background:#b3b3b3;"></div>
<svg class="a" style="left:883px;top:312px" width="10" height="10" viewBox="0 0 10 10"><path d="M5 1 L9.5 9 L0.5 9 Z" fill="#dcdcdc"/><path d="M0.5 9 L5 1" stroke="#fff" stroke-width="1" fill="none"/><path d="M5 1 L9.5 9" stroke="#7a7a7a" stroke-width="1" fill="none"/></svg>
<div class="a" style="left:883px;top:322px;width:10px;height:1px;background:#8e8e8e;"></div>
<div class="a" style="left:883px;top:323px;width:10px;height:358px;background:#dcdcdc;border-style:solid;border-width:1px;border-color:#fff #8e8e8e #8e8e8e #fff"></div>
<div class="a" style="left:883px;top:681px;width:10px;height:11px;background:#b3b3b3;"></div>
<svg class="a" style="left:883px;top:682px" width="10" height="10" viewBox="0 0 10 10"><path d="M0.5 1 L9.5 1 L5 9 Z" fill="#dcdcdc"/><path d="M0.5 1 L5 9" stroke="#fff" stroke-width="1" fill="none"/><path d="M9.5 1 L5 9" stroke="#7a7a7a" stroke-width="1" fill="none"/></svg>
<div class="t" style="left:366.5px;top:323px;font-size:12.8px;color:#000"><span style="display:inline-block;width:24.05px">47</span><span style="display:inline-block;width:24.05px">45</span><span style="display:inline-block;width:24.05px">54</span><span style="display:inline-block;width:24.05px">20</span><span style="display:inline-block;width:24.05px">2F</span><span style="display:inline-block;width:24.05px">69</span><span style="display:inline-block;width:24.05px">6D</span><span style="display:inline-block;width:24.05px">61</span><span style="display:inline-block;width:24.05px">67</span><span style="display:inline-block;width:24.05px">65</span><span style="display:inline-block;width:24.05px">73</span><span style="display:inline-block;width:24.05px">2F</span><span style="display:inline-block;width:24.05px">76</span><span style="display:inline-block;width:24.05px">50</span><span style="display:inline-block;width:24.05px">33</span><span style="display:inline-block;width:24.05px">39</span></div>
<div class="t" style="left:750px;top:324px;font-size:13.33px;color:#000;font-family:'Liberation Mono',monospace">GET /images/vP39</div>
<div class="t" style="left:366.5px;top:340px;font-size:12.8px;color:#000"><span style="display:inline-block;width:24.05px">31</span><span style="display:inline-block;width:24.05px">30</span><span style="display:inline-block;width:24.05px">4E</span><span style="display:inline-block;width:24.05px">4A</span><span style="display:inline-block;width:24.05px">70</span><span style="display:inline-block;width:24.05px">2F</span><span style="display:inline-block;width:24.05px">36</span><span style="display:inline-block;width:24.05px">58</span><span style="display:inline-block;width:24.05px">71</span><span style="display:inline-block;width:24.05px">59</span><span style="display:inline-block;width:24.05px">39</span><span style="display:inline-block;width:24.05px">34</span><span style="display:inline-block;width:24.05px">6F</span><span style="display:inline-block;width:24.05px">31</span><span style="display:inline-block;width:24.05px">31</span><span style="display:inline-block;width:24.05px">53</span></div>
<div class="t" style="left:750px;top:341px;font-size:13.33px;color:#000;font-family:'Liberation Mono',monospace">10NJp/6XqY94o11S</div>
<div class="t" style="left:366.5px;top:357px;font-size:12.8px;color:#000"><span style="display:inline-block;width:24.05px">52</span><span style="display:inline-block;width:24.05px">44</span><span style="display:inline-block;width:24.05px">70</span><span style="display:inline-block;width:24.05px">6E</span><span style="display:inline-block;width:24.05px">5F</span><span style="display:inline-block;width:24.05px">32</span><span style="display:inline-block;width:24.05px">46</span><span style="display:inline-block;width:24.05px">32</span><span style="display:inline-block;width:24.05px">55</span><span style="display:inline-block;width:24.05px">63</span><span style="display:inline-block;width:24.05px">2F</span><span style="display:inline-block;width:24.05px">4A</span><span style="display:inline-block;width:24.05px">4E</span><span style="display:inline-block;width:24.05px">75</span><span style="display:inline-block;width:24.05px">30</span><span style="display:inline-block;width:24.05px">70</span></div>
<div class="t" style="left:750px;top:358px;font-size:13.33px;color:#000;font-family:'Liberation Mono',monospace">RDpn_2F2Uc/JNu0p</div>
<div class="t" style="left:366.5px;top:374px;font-size:12.8px;color:#000"><span style="display:inline-block;width:24.05px">37</span><span style="display:inline-block;width:24.05px">46</span><span style="display:inline-block;width:24.05px">46</span><span style="display:inline-block;width:24.05px">61</span><span style="display:inline-block;width:24.05px">74</span><span style="display:inline-block;width:24.05px">58</span><span style="display:inline-block;width:24.05px">57</span><span style="display:inline-block;width:24.05px">58</span><span style="display:inline-block;width:24.05px">47</span><span style="display:inline-block;width:24.05px">74</span><span style="display:inline-block;width:24.05px">49</span><span style="display:inline-block;width:24.05px">5A</span><span style="display:inline-block;width:24.05px">6D</span><span style="display:inline-block;width:24.05px">7A</span><span style="display:inline-block;width:24.05px">2F</span><span style="display:inline-block;width:24.05px">6F</span></div>
<div class="t" style="left:750px;top:375px;font-size:13.33px;color:#000;font-family:'Liberation Mono',monospace">7FFatXWXGtIZmz/o</div>
<div class="t" style="left:366.5px;top:391px;font-size:12.8px;color:#000"><span style="display:inline-block;width:24.05px">4E</span><span style="display:inline-block;width:24.05px">6D</span><span style="display:inline-block;width:24.05px">38</span><span style="display:inline-block;width:24.05px">51</span><span style="display:inline-block;width:24.05px">4A</span><span style="display:inline-block;width:24.05px">4E</span><span style="display:inline-block;width:24.05px">46</span><span style="display:inline-block;width:24.05px">54</span><span style="display:inline-block;width:24.05px">55</span><span style="display:inline-block;width:24.05px">6A</span><span style="display:inline-block;width:24.05px">65</span><span style="display:inline-block;width:24.05px">76</span><span style="display:inline-block;width:24.05px">79</span><span style="display:inline-block;width:24.05px">31</span><span style="display:inline-block;width:24.05px">38</span><span style="display:inline-block;width:24.05px">30</span></div>
<div class="t" style="left:750px;top:392px;font-size:13.33px;color:#000;font-family:'Liberation Mono',monospace">Nm8QJNFTUjevy180</div>
<div class="t" style="left:366.5px;top:408px;font-size:12.8px;color:#000"><span style="display:inline-block;width:24.05px">56</span><span style="display:inline-block;width:24.05px">4C</span><span style="display:inline-block;width:24.05px">46</span><span style="display:inline-block;width:24.05px">59</span><span style="display:inline-block;width:24.05px">5A</span><span style="display:inline-block;width:24.05px">2F</span><span style="display:inline-block;width:24.05px">6B</span><span style="display:inline-block;width:24.05px">64</span><span style="display:inline-block;width:24.05px">51</span><span style="display:inline-block;width:24.05px">68</span><span style="display:inline-block;width:24.05px">33</span><span style="display:inline-block;width:24.05px">55</span><span style="display:inline-block;width:24.05px">56</span><span style="display:inline-block;width:24.05px">68</span><span style="display:inline-block;width:24.05px">6C</span><span style="display:inline-block;width:24.05px">36</span></div>
<div class="t" style="left:750px;top:409px;font-size:13.33px;color:#000;font-family:'Liberation Mono',monospace">VLFYZ/kdQh3UVhl6</div>
<div class="t" style="left:366.5px;top:425px;font-size:12.8px;color:#000"><span style="display:inline-block;width:24.05px">61</span><span style="display:inline-block;width:24.05px">45</span><span style="display:inline-block;width:24.05px">48</span><span style="display:inline-block;width:24.05px">2F</span><span style="display:inline-block;width:24.05px">73</span><span style="display:inline-block;width:24.05px">70</span><span style="display:inline-block;width:24.05px">67</span><span style="display:inline-block;width:24.05px">79</span><span style="display:inline-block;width:24.05px">4F</span><span style="display:inline-block;width:24.05px">43</span><span style="display:inline-block;width:24.05px">66</span><span style="display:inline-block;width:24.05px">57</span><span style="display:inline-block;width:24.05px">2F</span><span style="display:inline-block;width:24.05px">43</span><span style="display:inline-block;width:24.05px">6E</span><span style="display:inline-block;width:24.05px">30</span></div>
<div class="t" style="left:750px;top:426px;font-size:13.33px;color:#000;font-family:'Liberation Mono',monospace">aEH/spgyOCfW/Cn0</div>
<div class="t" style="left:366.5px;top:442px;font-size:12.8px;color:#000"><span style="display:inline-block;width:24.05px">4A</span><span style="display:inline-block;width:24.05px">67</span><span style="display:inline-block;width:24.05px">49</span><span style="display:inline-block;width:24.05px">7A</span><span style="display:inline-block;width:24.05px">79</span><span style="display:inline-block;width:24.05px">4D</span><span style="display:inline-block;width:24.05px">59</span><span style="display:inline-block;width:24.05px">31</span><span style="display:inline-block;width:24.05px">36</span><span style="display:inline-block;width:24.05px">4B</span><span style="display:inline-block;width:24.05px">36</span><span style="display:inline-block;width:24.05px">75</span><span style="display:inline-block;width:24.05px">76</span><span style="display:inline-block;width:24.05px">57</span><span style="display:inline-block;width:24.05px">78</span><span style="display:inline-block;width:24.05px">66</span></div>
<div class="t" style="left:750px;top:443px;font-size:13.33px;color:#000;font-family:'Liberation Mono',monospace">JgIzyMY16K6uvWxf</div>
<div class="t" style="left:366.5px;top:459px;font-size:12.8px;color:#000"><span style="display:inline-block;width:24.05px">75</span><span style="display:inline-block;width:24.05px">30</span><span style="display:inline-block;width:24.05px">5F</span><span style="display:inline-block;width:24.05px">32</span><span style="display:inline-block;width:24.05px">2F</span><span style="display:inline-block;width:24.05px">46</span><span style="display:inline-block;width:24.05px">30</span><span style="display:inline-block;width:24.05px">68</span><span style="display:inline-block;width:24.05px">6E</span><span style="display:inline-block;width:24.05px">73</span><span style="display:inline-block;width:24.05px">33</span><span style="display:inline-block;width:24.05px">72</span><span style="display:inline-block;width:24.05px">75</span><span style="display:inline-block;width:24.05px">5A</span><span style="display:inline-block;width:24.05px">79</span><span style="display:inline-block;width:24.05px">2F</span></div>
<div class="t" style="left:750px;top:460px;font-size:13.33px;color:#000;font-family:'Liberation Mono',monospace">u0_2/F0hns3ruZy/</div>
<div class="t" style="left:366.5px;top:476px;font-size:12.8px;color:#000"><span style="display:inline-block;width:24.05px">6E</span><span style="display:inline-block;width:24.05px">50</span><span style="display:inline-block;width:24.05px">76</span><span style="display:inline-block;width:24.05px">55</span><span style="display:inline-block;width:24.05px">48</span><span style="display:inline-block;width:24.05px">50</span><span style="display:inline-block;width:24.05px">73</span><span style="display:inline-block;width:24.05px">58</span><span style="display:inline-block;width:24.05px">4C</span><span style="display:inline-block;width:24.05px">49</span><span style="display:inline-block;width:24.05px">42</span><span style="display:inline-block;width:24.05px">45</span><span style="display:inline-block;width:24.05px">46</span><span style="display:inline-block;width:24.05px">52</span><span style="display:inline-block;width:24.05px">70</span><span style="display:inline-block;width:24.05px">4A</span></div>
<div class="t" style="left:750px;top:477px;font-size:13.33px;color:#000;font-family:'Liberation Mono',monospace">nPvUHPsXLIBEFRpJ</div>
<div class="t" style="left:366.5px;top:493px;font-size:12.8px;color:#000"><span style="display:inline-block;width:24.05px">6C</span><span style="display:inline-block;width:24.05px">2F</span><span style="display:inline-block;width:24.05px">5A</span><span style="display:inline-block;width:24.05px">48</span><span style="display:inline-block;width:24.05px">49</span><span style="display:inline-block;width:24.05px">75</span><span style="display:inline-block;width:24.05px">6C</span><span style="display:inline-block;width:24.05px">55</span><span style="display:inline-block;width:24.05px">46</span><span style="display:inline-block;width:24.05px">33</span><span style="display:inline-block;width:24.05px">2F</span><span style="display:inline-block;width:24.05px">52</span><span style="display:inline-block;width:24.05px">48</span><span style="display:inline-block;width:24.05px">4E</span><span style="display:inline-block;width:24.05px">62</span><span style="display:inline-block;width:24.05px">78</span></div>
<div class="t" style="left:750px;top:494px;font-size:13.33px;color:#000;font-family:'Liberation Mono',monospace">l/ZHIulUF3/RHNbx</div>
<div class="t" style="left:366.5px;top:510px;font-size:12.8px;color:#000"><span style="display:inline-block;width:24.05px">2E</span><span style="display:inline-block;width:24.05px">67</span><span style="display:inline-block;width:24.05px">69</span><span style="display:inline-block;width:24.05px">66</span><span style="display:inline-block;width:24.05px">20</span><span style="display:inline-block;width:24.05px">48</span><span style="display:inline-block;width:24.05px">54</span><span style="display:inline-block;width:24.05px">54</span><span style="display:inline-block;width:24.05px">50</span><span style="display:inline-block;width:24.05px">2F</span><span style="display:inline-block;width:24.05px">31</span><span style="display:inline-block;width:24.05px">2E</span><span style="display:inline-block;width:24.05px">31</span><span style="display:inline-block;width:24.05px">0D</span><span style="display:inline-block;width:24.05px">0A</span><span style="display:inline-block;width:24.05px">55</span></div>
<div class="t" style="left:750px;top:511px;font-size:13.33px;color:#000;font-family:'Liberation Mono',monospace">.gif HTTP/1.1..U</div>
<div class="t" style="left:366.5px;top:527px;font-size:12.8px;color:#000"><span style="display:inline-block;width:24.05px">73</span><span style="display:inline-block;width:24.05px">65</span><span style="display:inline-block;width:24.05px">72</span><span style="display:inline-block;width:24.05px">2D</span><span style="display:inline-block;width:24.05px">41</span><span style="display:inline-block;width:24.05px">67</span><span style="display:inline-block;width:24.05px">65</span><span style="display:inline-block;width:24.05px">6E</span><span style="display:inline-block;width:24.05px">74</span><span style="display:inline-block;width:24.05px">3A</span><span style="display:inline-block;width:24.05px">20</span><span style="display:inline-block;width:24.05px">4D</span><span style="display:inline-block;width:24.05px">6F</span><span style="display:inline-block;width:24.05px">7A</span><span style="display:inline-block;width:24.05px">69</span><span style="display:inline-block;width:24.05px">6C</span></div>
<div class="t" style="left:750px;top:528px;font-size:13.33px;color:#000;font-family:'Liberation Mono',monospace">ser-Agent: Mozil</div>
<div class="t" style="left:366.5px;top:544px;font-size:12.8px;color:#000"><span style="display:inline-block;width:24.05px">6C</span><span style="display:inline-block;width:24.05px">61</span><span style="display:inline-block;width:24.05px">2F</span><span style="display:inline-block;width:24.05px">34</span><span style="display:inline-block;width:24.05px">2E</span><span style="display:inline-block;width:24.05px">30</span><span style="display:inline-block;width:24.05px">20</span><span style="display:inline-block;width:24.05px">28</span><span style="display:inline-block;width:24.05px">63</span><span style="display:inline-block;width:24.05px">6F</span><span style="display:inline-block;width:24.05px">6D</span><span style="display:inline-block;width:24.05px">70</span><span style="display:inline-block;width:24.05px">61</span><span style="display:inline-block;width:24.05px">74</span><span style="display:inline-block;width:24.05px">69</span><span style="display:inline-block;width:24.05px">62</span></div>
<div class="t" style="left:750px;top:545px;font-size:13.33px;color:#000;font-family:'Liberation Mono',monospace">la/4.0 (compatib</div>
<div class="t" style="left:366.5px;top:561px;font-size:12.8px;color:#000"><span style="display:inline-block;width:24.05px">6C</span><span style="display:inline-block;width:24.05px">65</span><span style="display:inline-block;width:24.05px">3B</span><span style="display:inline-block;width:24.05px">20</span><span style="display:inline-block;width:24.05px">4D</span><span style="display:inline-block;width:24.05px">53</span><span style="display:inline-block;width:24.05px">49</span><span style="display:inline-block;width:24.05px">45</span><span style="display:inline-block;width:24.05px">20</span><span style="display:inline-block;width:24.05px">38</span><span style="display:inline-block;width:24.05px">2E</span><span style="display:inline-block;width:24.05px">30</span><span style="display:inline-block;width:24.05px">3B</span><span style="display:inline-block;width:24.05px">20</span><span style="display:inline-block;width:24.05px">57</span><span style="display:inline-block;width:24.05px">69</span></div>
<div class="t" style="left:750px;top:562px;font-size:13.33px;color:#000;font-family:'Liberation Mono',monospace">le; MSIE 8.0; Wi</div>
<div class="t" style="left:366.5px;top:578px;font-size:12.8px;color:#000"><span style="display:inline-block;width:24.05px">6E</span><span style="display:inline-block;width:24.05px">64</span><span style="display:inline-block;width:24.05px">6F</span><span style="display:inline-block;width:24.05px">77</span><span style="display:inline-block;width:24.05px">73</span><span style="display:inline-block;width:24.05px">20</span><span style="display:inline-block;width:24.05px">4E</span><span style="display:inline-block;width:24.05px">54</span><span style="display:inline-block;width:24.05px">20</span><span style="display:inline-block;width:24.05px">35</span><span style="display:inline-block;width:24.05px">2E</span><span style="display:inline-block;width:24.05px">31</span><span style="display:inline-block;width:24.05px">29</span><span style="display:inline-block;width:24.05px">0D</span><span style="display:inline-block;width:24.05px">0A</span><span style="display:inline-block;width:24.05px">48</span></div>
<div class="t" style="left:750px;top:579px;font-size:13.33px;color:#000;font-family:'Liberation Mono',monospace">ndows NT 5.1)..H</div>
<div class="t" style="left:366.5px;top:595px;font-size:12.8px;color:#000"><span style="display:inline-block;width:24.05px">6F</span><span style="display:inline-block;width:24.05px">73</span><span style="display:inline-block;width:24.05px">74</span><span style="display:inline-block;width:24.05px">3A</span><span style="display:inline-block;width:24.05px">20</span><span style="display:inline-block;width:24.05px">70</span><span style="display:inline-block;width:24.05px">61</span><span style="display:inline-block;width:24.05px">73</span><span style="display:inline-block;width:24.05px">74</span><span style="display:inline-block;width:24.05px">66</span><span style="display:inline-block;width:24.05px">70</span><span style="display:inline-block;width:24.05px">6C</span><span style="display:inline-block;width:24.05px">75</span><span style="display:inline-block;width:24.05px">74</span><span style="display:inline-block;width:24.05px">6F</span><span style="display:inline-block;width:24.05px">73</span></div>
<div class="t" style="left:750px;top:596px;font-size:13.33px;color:#000;font-family:'Liberation Mono',monospace">ost: pastfplutos</div>
<div class="t" style="left:366.5px;top:612px;font-size:12.8px;color:#000"><span style="display:inline-block;width:24.05px">63</span><span style="display:inline-block;width:24.05px">69</span><span style="display:inline-block;width:24.05px">65</span><span style="display:inline-block;width:24.05px">6E</span><span style="display:inline-block;width:24.05px">74</span><span style="display:inline-block;width:24.05px">69</span><span style="display:inline-block;width:24.05px">73</span><span style="display:inline-block;width:24.05px">74</span><span style="display:inline-block;width:24.05px">73</span><span style="display:inline-block;width:24.05px">74</span><span style="display:inline-block;width:24.05px">68</span><span style="display:inline-block;width:24.05px">65</span><span style="display:inline-block;width:24.05px">2E</span><span style="display:inline-block;width:24.05px">63</span><span style="display:inline-block;width:24.05px">6F</span><span style="display:inline-block;width:24.05px">6D</span></div>
<div class="t" style="left:750px;top:613px;font-size:13.33px;color:#000;font-family:'Liberation Mono',monospace">cientiststhe.com</div>
<div class="t" style="left:366.5px;top:629px;font-size:12.8px;color:#000"><span style="display:inline-block;width:24.05px">0D</span><span style="display:inline-block;width:24.05px">0A</span><span style="display:inline-block;width:24.05px">43</span><span style="display:inline-block;width:24.05px">6F</span><span style="display:inline-block;width:24.05px">6E</span><span style="display:inline-block;width:24.05px">6E</span><span style="display:inline-block;width:24.05px">65</span><span style="display:inline-block;width:24.05px">63</span><span style="display:inline-block;width:24.05px">74</span><span style="display:inline-block;width:24.05px">69</span><span style="display:inline-block;width:24.05px">6F</span><span style="display:inline-block;width:24.05px">6E</span><span style="display:inline-block;width:24.05px">3A</span><span style="display:inline-block;width:24.05px">20</span><span style="display:inline-block;width:24.05px">4B</span><span style="display:inline-block;width:24.05px">65</span></div>
<div class="t" style="left:750px;top:630px;font-size:13.33px;color:#000;font-family:'Liberation Mono',monospace">..Connection: Ke</div>
<div class="t" style="left:366.5px;top:646px;font-size:12.8px;color:#000"><span style="display:inline-block;width:24.05px">65</span><span style="display:inline-block;width:24.05px">70</span><span style="display:inline-block;width:24.05px">2D</span><span style="display:inline-block;width:24.05px">41</span><span style="display:inline-block;width:24.05px">6C</span><span style="display:inline-block;width:24.05px">69</span><span style="display:inline-block;width:24.05px">76</span><span style="display:inline-block;width:24.05px">65</span><span style="display:inline-block;width:24.05px">0D</span><span style="display:inline-block;width:24.05px">0A</span><span style="display:inline-block;width:24.05px">43</span><span style="display:inline-block;width:24.05px">61</span><span style="display:inline-block;width:24.05px">63</span><span style="display:inline-block;width:24.05px">68</span><span style="display:inline-block;width:24.05px">65</span><span style="display:inline-block;width:24.05px">2D</span></div>
<div class="t" style="left:750px;top:647px;font-size:13.33px;color:#000;font-family:'Liberation Mono',monospace">ep-Alive..Cache-</div>
<div class="t" style="left:366.5px;top:663px;font-size:12.8px;color:#000"><span style="display:inline-block;width:24.05px">43</span><span style="display:inline-block;width:24.05px">6F</span><span style="display:inline-block;width:24.05px">6E</span><span style="display:inline-block;width:24.05px">74</span><span style="display:inline-block;width:24.05px">72</span><span style="display:inline-block;width:24.05px">6F</span><span style="display:inline-block;width:24.05px">6C</span><span style="display:inline-block;width:24.05px">3A</span><span style="display:inline-block;width:24.05px">20</span><span style="display:inline-block;width:24.05px">6E</span><span style="display:inline-block;width:24.05px">6F</span><span style="display:inline-block;width:24.05px">2D</span><span style="display:inline-block;width:24.05px">63</span><span style="display:inline-block;width:24.05px">61</span><span style="display:inline-block;width:24.05px">63</span><span style="display:inline-block;width:24.05px">68</span></div>
<div class="t" style="left:750px;top:664px;font-size:13.33px;color:#000;font-family:'Liberation Mono',monospace">Control: no-cach</div>
<div class="t" style="left:366.5px;top:680px;font-size:12.8px;color:#000"><span style="display:inline-block;width:24.05px">65</span><span style="display:inline-block;width:24.05px">0D</span><span style="display:inline-block;width:24.05px">0A</span><span style="display:inline-block;width:24.05px">0D</span><span style="display:inline-block;width:24.05px">0A</span></div>
<div class="t" style="left:750px;top:681px;font-size:13.33px;color:#000;font-family:'Liberation Mono',monospace">e....</div>
<div class="a" style="left:304px;top:698px;width:146px;height:23px;background:#dcdcdc;"></div>
<div class="a" style="left:305px;top:699px;width:144px;height:21px;background:#fff;border-style:solid;border-width:1px;border-color:#a0a0a0 #e8e8e8 #e8e8e8 #a0a0a0"></div>
<div class="a" style="left:451px;top:695px;width:160px;height:29px;background:#d9d9d9;border-style:solid;border-width:1px;border-color:#fff #8e8e8e #8e8e8e #fff"></div>
<div class="t" style="left:463.90px;top:710px;font-size:12.84px;color:#000;">Search Packet Payload</div>
<svg class="a" style="left:621px;top:703px" width="12" height="12" viewBox="0 0 12 12"><circle cx="6" cy="6" r="5" fill="#fff"/><path d="M2.46 9.54 A5 5 0 0 1 9.54 2.46" fill="none" stroke="#6e6e6e" stroke-width="0.9" stroke-dasharray="1.4 0.9"/></svg>
<div class="t" style="left:639.00px;top:710px;font-size:12.4px;color:#000;">Hex</div>
<svg class="a" style="left:672px;top:703px" width="12" height="12" viewBox="0 0 12 12"><circle cx="6" cy="6" r="5" fill="#fff"/><path d="M2.46 9.54 A5 5 0 0 1 9.54 2.46" fill="none" stroke="#6e6e6e" stroke-width="0.9" stroke-dasharray="1.4 0.9"/><circle cx="6" cy="6" r="2" fill="#000"/></svg>
<div class="t" style="left:690.00px;top:710px;font-size:13.2px;color:#000;">Text</div>
<div class="a" style="left:727px;top:703px;width:11px;height:11px;background:#fff;border-style:solid;border-width:1px;border-color:#7a7a7a #fff #fff #7a7a7a"></div>
<div class="t" style="left:743.50px;top:710px;font-size:12.58px;color:#000;">NoCase</div>
<div class="a" style="left:290px;top:713px;width:10px;height:10px;background:#dcdcdc;border:1px solid;border-color:#fff #8a8a8a #8a8a8a #fff"></div>
</body></html>
